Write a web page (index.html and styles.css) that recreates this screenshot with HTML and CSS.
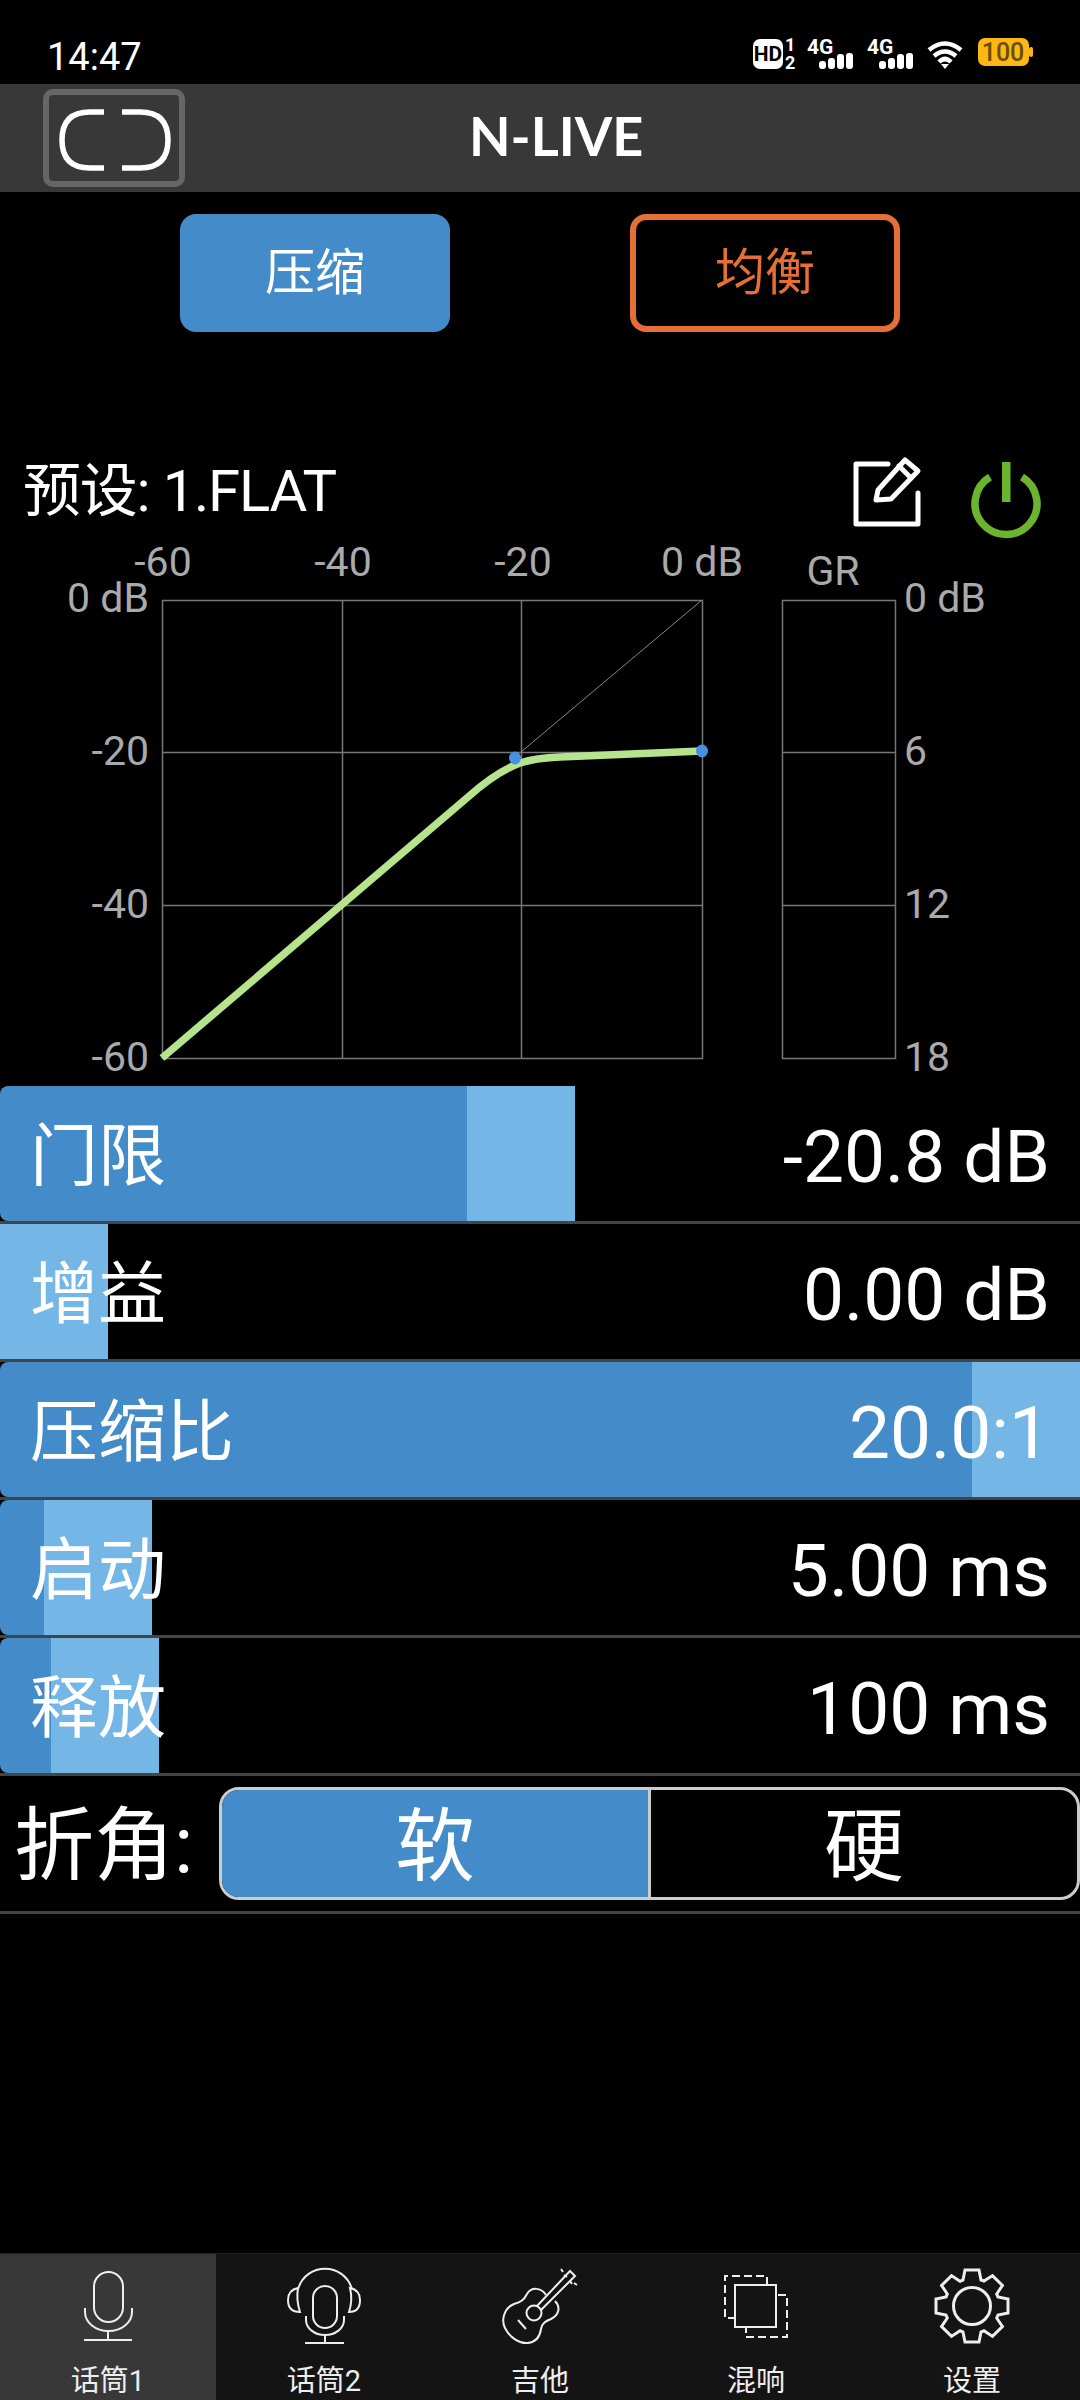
FILE: index.html
```html
<!DOCTYPE html>
<html lang="zh">
<head>
<meta charset="utf-8">
<title>N-LIVE</title>
<link rel="stylesheet" href="styles.css">
</head>
<body>
<div class="app">
  <div class="statusbar">
    <span class="clock">14:47</span>
    <svg class="status-icons" width="300" height="40" viewBox="0 0 300 40">
      <rect x="0" y="4" width="30" height="30" rx="7" fill="#fff"/>
      <text x="15" y="26" class="st-hd">HD</text>
      <text x="32" y="16" class="st-sim">1</text>
      <text x="32" y="34" class="st-sim">2</text>
      <g>
        <text x="54" y="19" class="st-net">4G</text>
        <rect x="66" y="26" width="7" height="8" rx="3" fill="#fff"/>
        <rect x="75" y="23" width="7" height="11" rx="3" fill="#fff"/>
        <rect x="84" y="19" width="7" height="15" rx="3" fill="#fff"/>
        <rect x="93" y="18" width="7" height="16" rx="3" fill="#fff"/>
      </g>
      <g>
        <text x="114" y="19" class="st-net">4G</text>
        <rect x="126" y="26" width="7" height="8" rx="3" fill="#fff"/>
        <rect x="135" y="23" width="7" height="11" rx="3" fill="#fff"/>
        <rect x="144" y="19" width="7" height="15" rx="3" fill="#fff"/>
        <rect x="153" y="18" width="7" height="16" rx="3" fill="#fff"/>
      </g>
      <g fill="none" stroke="#fff" stroke-width="4.5">
        <path d="M176 15 Q192 2 208 15"/>
        <path d="M181 21 Q192 12 203 21"/>
        <path d="M186 27 Q192 21 198 27"/>
      </g>
      <path d="M188 29 L192 34 L196 29 Z" fill="#fff"/>
      <rect x="225" y="3" width="51" height="28" rx="7" fill="#fdb813"/>
      <rect x="276" y="12" width="4" height="10" rx="2" fill="#fdb813"/>
      <text x="250" y="26" class="st-batt">100</text>
    </svg>
  </div>

  <header class="titlebar">
    <button class="link-btn">
      <svg width="130" height="86" viewBox="0 0 130 86">
        <path d="M55 17 H41 Q13 17 13 45 Q13 73 41 73 H55" class="link-glyph"/>
        <path d="M73 17 H91 Q119 17 119 45 Q119 73 91 73 H73" class="link-glyph"/>
      </svg>
    </button>
    <h1 class="app-title">N-LIVE</h1>
  </header>

  <main class="content">
    <nav class="mode-tabs">
      <a class="mode-tab mode-tab-active">压缩</a>
      <a class="mode-tab mode-tab-alt">均衡</a>
    </nav>

    <section class="preset-row">
      <span class="preset-name">预设: 1.FLAT</span>
      <svg class="edit-icon" width="76" height="76" viewBox="848 454 76 76">
        <path d="M888 464 H856 V524 H918 V493" class="edit-stroke"/>
        <path d="M878 490 L905 460 L918 471 L891 499 L876 500 Z" class="edit-stroke"/>
        <path d="M899 466 L911 478" class="edit-stroke"/>
      </svg>
      <svg class="power-icon" width="76" height="84" viewBox="968 458 76 84">
        <path d="M990 477 A31 31 0 1 0 1022 477" fill="none" stroke="#6ab42e" stroke-width="7.5"/>
        <rect x="1002" y="462" width="8.5" height="40" fill="#6ab42e"/>
      </svg>
    </section>

    <svg class="chart" width="1080" height="554" viewBox="0 530 1080 554">
      <!-- transfer curve grid -->
      <g class="grid">
        <rect x="162.500" y="600.500" width="540" height="458"/>
        <path d="M342.500 600 V1058 M521.500 600 V1058 M162 752.500 H702 M162 905.500 H702"/>
        <rect x="782.500" y="600.500" width="113" height="458"/>
        <path d="M782 752.500 H895 M782 905.500 H895"/>
      </g>
      <path d="M521 752 L702 600" class="unity"/>
      <path d="M162 1058 L468 797 Q496 772 520 763 Q536 758 560 757 L702 751" class="curve"/>
      <ellipse cx="515" cy="758" rx="6" ry="6.500" class="handle"/>
      <ellipse cx="702" cy="751" rx="6" ry="6.500" class="handle"/>
      <!-- axis labels -->
      <g class="axis mid">
        <text x="163" y="576">-60</text>
        <text x="343" y="576">-40</text>
        <text x="523" y="576">-20</text>
        <text x="702" y="576">0 dB</text>
        <text x="833" y="585">GR</text>
      </g>
      <g class="axis end">
        <text x="149" y="612">0 dB</text>
        <text x="149" y="765">-20</text>
        <text x="149" y="918">-40</text>
        <text x="149" y="1071">-60</text>
      </g>
      <g class="axis">
        <text x="904" y="612">0 dB</text>
        <text x="904" y="765">6</text>
        <text x="904" y="918">12</text>
        <text x="904" y="1071">18</text>
      </g>
    </svg>

    <section class="params">
      <div class="param">
        <div class="track"><i class="level" style="width:467px"></i><i class="thumb"></i></div>
        <div class="param-text"><span class="param-label">门限</span><span class="param-value">-20.8 dB</span></div>
      </div>
      <div class="param">
        <div class="track"><i class="thumb"></i></div>
        <div class="param-text"><span class="param-label">增益</span><span class="param-value">0.00 dB</span></div>
      </div>
      <div class="param">
        <div class="track"><i class="level" style="width:972px"></i><i class="thumb"></i></div>
        <div class="param-text"><span class="param-label">压缩比</span><span class="param-value">20.0:1</span></div>
      </div>
      <div class="param">
        <div class="track"><i class="level" style="width:44px"></i><i class="thumb"></i></div>
        <div class="param-text"><span class="param-label">启动</span><span class="param-value">5.00 ms</span></div>
      </div>
      <div class="param">
        <div class="track"><i class="level" style="width:51px"></i><i class="thumb"></i></div>
        <div class="param-text"><span class="param-label">释放</span><span class="param-value">100 ms</span></div>
      </div>
      <div class="knee">
        <span class="knee-label">折角:</span>
        <div class="segment">
          <span class="segment-item segment-on">软</span>
          <span class="segment-item">硬</span>
        </div>
      </div>
    </section>
  </main>

  <nav class="tabbar">
    <a class="tab tab-active">
      <svg class="tab-icon" width="216" height="84" viewBox="0 2265 216 84">
        <rect x="94" y="2272" width="29" height="50" rx="14.500"/>
        <path d="M85 2308 V2312 A23.500 19 0 0 0 132 2312 V2308"/>
        <path d="M108 2331 V2340 M84 2340 H132"/>
      </svg>
      <span>话筒1</span>
    </a>
    <a class="tab">
      <svg class="tab-icon" width="216" height="84" viewBox="216 2265 216 84">
        <rect x="313" y="2286" width="24" height="42" rx="12"/>
        <path d="M306 2316 V2320 A19 15 0 0 0 344 2320 V2316"/>
        <path d="M325 2335 V2343 M305 2343 H344"/>
        <path d="M298 2289 C306 2262 344 2262 352 2289"/>
        <path d="M298 2288 Q288 2290 288 2300 Q288 2312 300 2312 Q296 2300 298 2288 Z"/>
        <path d="M350 2288 Q360 2290 360 2300 Q360 2312 349 2312 Q353 2300 350 2288 Z"/>
      </svg>
      <span>话筒2</span>
    </a>
    <a class="tab">
      <svg class="tab-icon" width="216" height="84" viewBox="432 2265 216 84">
        <path d="M546 2295 C541 2287 531 2287 527 2294 C524 2300 521 2302 514 2304 C504 2308 501 2320 505 2328 C510 2338 520 2344 528 2343 C536 2342 540 2336 541 2329 C542 2323 546 2321 551 2319 C559 2315 561 2307 555 2301"/>
        <circle cx="534" cy="2313" r="7.500"/>
        <path d="M518 2320 L526 2329"/>
        <path d="M537 2306 L570 2271 L575 2276 L541 2310"/>
        <path d="M563 2272 L561 2269 M567 2277 L564 2275 M574 2283 L577 2285 M570 2281 L572 2284"/>
      </svg>
      <span>吉他</span>
    </a>
    <a class="tab">
      <svg class="tab-icon" width="216" height="84" viewBox="648 2265 216 84">
        <path d="M767 2285 V2276 H725 V2318 H735" class="dashed"/>
        <rect x="735" y="2285" width="41" height="42"/>
        <path d="M778 2295 H787 V2337 H746 V2327" class="dashed"/>
      </svg>
      <span>混响</span>
    </a>
    <a class="tab">
      <svg class="tab-icon tab-icon-bold" width="216" height="84" viewBox="864 2265 216 84">
        <g transform="translate(932 2266)">
          <path d="M33 4 H47 L49 14 A27.500 27.500 0 0 1 52 15 L60.500 9.600 L70.400 19.500 L64.700 28 A27.500 27.500 0 0 1 66 31 L76 33 V47 L66 49 A27.500 27.500 0 0 1 64.700 52 L70.400 60.500 L60.500 70.400 L52 64.700 A27.500 27.500 0 0 1 49 66 L47 76 H33 L31 66 A27.500 27.500 0 0 1 28 64.700 L19.500 70.400 L9.600 60.500 L15.300 52 A27.500 27.500 0 0 1 14 49 L4 47 V33 L14 31 A27.500 27.500 0 0 1 15.300 28 L9.600 19.500 L19.500 9.600 L28 15.300 A27.500 27.500 0 0 1 31 14 Z"/>
          <circle cx="40" cy="40" r="18.500"/>
        </g>
      </svg>
      <span>设置</span>
    </a>
  </nav>
</div>
</body>
</html>
```

FILE: styles.css
```css
* { box-sizing: border-box; }

html, body { margin: 0; padding: 0; background: #000; }

body {
  color: #fff;
  font-family: Roboto, "Noto Sans CJK SC", sans-serif;
}

.app {
  width: 1080px;
  height: 2400px;
  display: flex;
  flex-direction: column;
  overflow: hidden;
}

/* status bar */
.statusbar {
  height: 84px;
  flex: none;
  display: flex;
  align-items: flex-start;
  justify-content: space-between;
  padding: 35px 27px 0 47px;
}
.clock { font-size: 38px; line-height: 40px; margin-top: 2px; }
.status-icons text { fill: #fff; font-family: Roboto, sans-serif; font-weight: 700; }
.status-icons .st-hd { font-size: 21px; fill: #000; text-anchor: middle; }
.st-sim { font-size: 18px; }
.st-net { font-size: 21px; }
.status-icons .st-batt { font-size: 25px; font-weight: 500; fill: #6b4d05; text-anchor: middle; }

/* title bar */
.titlebar {
  height: 108px;
  flex: none;
  background: #383838;
  display: flex;
  align-items: center;
  padding-left: 43px;
}
.link-btn {
  width: 142px;
  height: 98px;
  padding: 0;
  background: transparent;
  border: 6px solid #666;
  border-radius: 10px;
  display: flex;
  align-items: center;
  justify-content: center;
}
.link-glyph { fill: none; stroke: #fff; stroke-width: 5.5; }
.app-title {
  margin: 0 0 4px 284px;
  font-size: 54px;
  font-weight: 700;
  line-height: 60px;
  font-family: Lato, sans-serif;
}

/* main area */
.content { flex: 1; display: flex; flex-direction: column; }

.mode-tabs {
  display: flex;
  gap: 180px;
  padding: 22px 0 0 180px;
}
.mode-tab {
  width: 270px;
  height: 118px;
  padding-bottom: 10px;
  border-radius: 16px;
  display: flex;
  align-items: center;
  justify-content: center;
  font-size: 50px;
}
.mode-tab-active { background: #448bca; }
.mode-tab-alt { border: 6px solid #e56f36; color: #e56f36; }

.preset-row {
  height: 198px;
  flex: none;
  display: flex;
  align-items: flex-start;
  padding: 124px 0 0 23px;
}
.preset-name { font-size: 58px; line-height: 70px; flex: 1; letter-spacing: -1.2px; }
.edit-icon { margin: -2px 0 0; }
.power-icon { margin: 2px 36px 0 44px; position: relative; z-index: 1; }
.edit-stroke { fill: none; stroke: #fff; stroke-width: 5; stroke-linejoin: round; stroke-linecap: round; }

.chart { display: block; flex: none; }
.grid rect, .grid path { fill: none; stroke: #777; stroke-width: 1.5; }
.unity { stroke: #888; stroke-width: 1; fill: none; }
.curve { stroke: #b5e48c; stroke-width: 7.5; fill: none; }
.handle { fill: #4a90e2; }
.axis text { fill: #aaa; font-size: 41px; }
.axis.mid text { text-anchor: middle; }
.axis.end text { text-anchor: end; }

/* parameter sliders */
.params { margin-top: 2px; }
.param {
  height: 138px;
  border-bottom: 3px solid #444;
  display: grid;
}
.track, .param-text { grid-area: 1 / 1; }
.track { display: flex; align-items: stretch; }
.level { display: block; background: #448bca; border-radius: 8px 0 0 8px; }
.thumb { display: block; width: 108px; background: #74b6e6; }
.param-text {
  display: flex;
  align-items: center;
  justify-content: space-between;
  padding: 6px 30px 0 30px;
}
.param-label { font-size: 68px; line-height: 80px; }
.param-value { font-size: 73px; line-height: 80px; }

.knee {
  height: 138px;
  border-bottom: 3px solid #444;
  display: flex;
  align-items: center;
  padding-left: 14px;
}
.knee-label { font-size: 80px; width: 205px; line-height: 80px; padding-top: 4px; white-space: nowrap; }
.segment {
  flex: 1;
  height: 113px;
  border: 3px solid #ccc;
  border-radius: 20px;
  display: flex;
  overflow: hidden;
}
.segment-item {
  flex: 1;
  display: flex;
  align-items: center;
  justify-content: center;
  font-size: 80px;
  line-height: 90px;
  padding-top: 6px;
}
.segment-on { background: #448bca; border-right: 3px solid #ccc; }

/* bottom tabs */
.tabbar {
  height: 147px;
  flex: none;
  background: #141414;
  border-top: 1px solid #222;
  display: flex;
}
.tab {
  flex: 1;
  display: flex;
  flex-direction: column;
  align-items: center;
  padding-top: 11px;
  font-size: 29px;
  line-height: 34px;
  color: #eee;
}
.tab-active { background: #383838; }
.tab-icon { display: block; margin-bottom: 15px; flex: none; }
.tab-icon rect, .tab-icon path, .tab-icon circle { fill: none; stroke: #eee; stroke-width: 2; }
.tab-icon-bold path, .tab-icon-bold circle { stroke-width: 3; }
.tab-icon .dashed { stroke-dasharray: 8 4; }
```
